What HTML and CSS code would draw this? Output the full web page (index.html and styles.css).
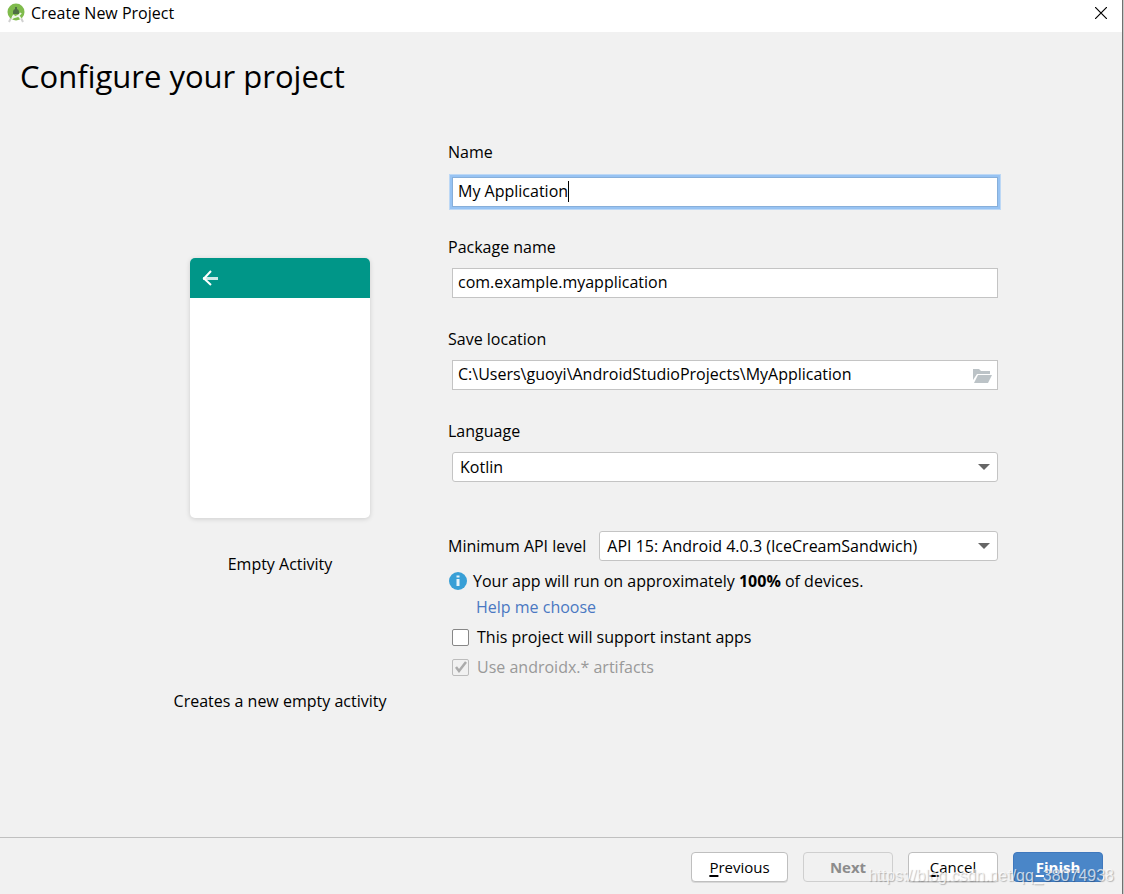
FILE: index.html
```html
<!DOCTYPE html>
<html lang="en">
<head>
  <meta charset="UTF-8" />
  <meta name="viewport" content="width=device-width, initial-scale=1.0"/>
  <title>Create New Project</title>
  <link rel="stylesheet" href="styles.css">
</head>
<body>
  <div class="window">
    <header class="title-bar">
      <svg class="app-icon" width="18" height="20" viewBox="0 0 18 20">
        <path d="M4 15L2 19M14 15l2 4" stroke="#d0d0d0" stroke-width="2" />
        <circle cx="9" cy="9" r="8.500" fill="#7fbb4c" />
        <path d="M6 9a3 3 0 0 1 6 0v2H6z" fill="#4f6f45" />
        <path d="M9 4v4" stroke="#4f6f45" stroke-width="2" />
        <path d="M7 12L5 16M11 12l3 4M5 14q5 1 9-4" stroke="#eef5e8" stroke-width="2" fill="none" />
      </svg>
      <span class="window-title">Create New Project</span>
      <button class="close-button" aria-label="Close">
        <svg width="12" height="12" viewBox="0 0 12 12">
          <path d="M0 0l12 12M12 0L0 12" stroke="#000" stroke-width="1.200" />
        </svg>
      </button>
    </header>

    <main class="content">
      <h1 class="page-title">Configure your project</h1>

      <div class="columns">
        <section class="activity">
          <div class="phone">
            <div class="phone-bar">
              <svg width="16" height="16" viewBox="0 0 16 16" fill="none" stroke="#fff" stroke-width="2">
                <path d="M1 8.500h15" stroke="#cceae7" stroke-width="3" />
                <path d="M9 1L2 8.500L9 15" stroke-width="2" />
              </svg>
            </div>
          </div>
          <div class="activity-name">Empty Activity</div>
          <div class="activity-text">Creates a new empty activity</div>
        </section>

        <form class="form">
          <div class="field field-active">
            <label for="name">Name</label>
            <div class="control">
              <input type="text" id="name" value="My Application" />
              <span class="caret"></span>
            </div>
          </div>

          <div class="field">
            <label for="package">Package name</label>
            <div class="control">
              <input type="text" id="package" value="com.example.myapplication" />
            </div>
          </div>

          <div class="field">
            <label for="location">Save location</label>
            <div class="control">
              <input type="text" id="location" value="C:\Users\guoyi\AndroidStudioProjects\MyApplication" />
              <button type="button" class="browse" aria-label="Browse">
                <svg width="19" height="14" viewBox="0 0 19 14" fill="#bcc3c7">
                  <path d="M0 0h6l2 2h9v3H4L0 11z" />
                  <path d="M5 6h14l-4 8H1z" />
                </svg>
              </button>
            </div>
          </div>

          <div class="field">
            <label for="language">Language</label>
            <div class="control">
              <select id="language">
                <option>Kotlin</option>
                <option>Java</option>
              </select>
              <svg class="arrow" width="12" height="6" viewBox="0 0 12 6"><path d="M0 0h12L6 6z" fill="#666" /></svg>
            </div>
          </div>

          <div class="api-row">
            <label for="api">Minimum API level</label>
            <div class="control">
              <select id="api">
                <option>API 15: Android 4.0.3 (IceCreamSandwich)</option>
              </select>
              <svg class="arrow" width="12" height="6" viewBox="0 0 12 6"><path d="M0 0h12L6 6z" fill="#666" /></svg>
            </div>
          </div>

          <p class="info">
            <svg width="18" height="18" viewBox="0 0 18 18">
              <circle cx="9" cy="9" r="9" fill="#389fd6" />
              <path d="M7.500 3.500h3v2h-3zM7.500 7h3v7h-3z" fill="#e6f4fb" />
            </svg>
            <span>Your app will run on approximately <b>100%</b> of devices.</span>
          </p>
          <a class="help" href="#">Help me choose</a>

          <label class="check">
            <input type="checkbox" />
            This project will support instant apps
          </label>
          <label class="check check-disabled">
            <input type="checkbox" checked disabled />
            <svg class="tick" width="12" height="12" viewBox="0 0 12 12">
              <path d="M1 6l3 4L11 1" fill="none" stroke="#ababab" stroke-width="2.500" />
            </svg>
            Use androidx.* artifacts
          </label>
        </form>
      </div>
    </main>

    <footer class="footer">
      <button class="button button-wide"><span><u>P</u>revious</span></button>
      <button class="button" disabled>Next</button>
      <button class="button"><span><u>C</u>ancel</span></button>
      <button class="button button-primary"><span><u>F</u>inish</span></button>
      <div class="watermark">https://blog.csdn.net/qq_38074938</div>
    </footer>
  </div>
</body>
</html>
```
FILE: styles.css
```css
* {
  box-sizing: border-box;
}

body {
  margin: 0;
  background-color: #c8c8c8;
  font-family: 'Open Sans', 'Noto Sans', sans-serif;
  font-size: 16px;
  line-height: 24px;
  color: #000000;
}

input,
select,
button {
  font: inherit;
  color: inherit;
  margin: 0;
}

.window {
  display: flex;
  flex-direction: column;
  min-height: 100vh;
  margin-right: 1px;
  border-right: 1px solid #707070;
  background-color: #f1f1f1;
}

/* title bar */

.title-bar {
  display: flex;
  align-items: center;
  height: 32px;
  padding: 0 15px 6px 7px;
  background-color: #ffffff;
}

.window-title {
  flex: 1;
  margin-left: 6px;
}

.close-button {
  display: flex;
  padding: 0;
  border: none;
  background: none;
}

/* content */

.content {
  flex: 1;
}

.page-title {
  margin: 0;
  padding: 24px 20px 0;
  font-size: 31px;
  font-weight: 400;
  line-height: 40px;
}

.columns {
  display: grid;
  grid-template-columns: 208px 1fr;
  column-gap: 64px;
  padding: 44px 124px 40px 176px;
}

.activity {
  display: flex;
  flex-direction: column;
  align-items: center;
  padding-top: 118px;
  white-space: nowrap;
}

.phone {
  width: 180px;
  height: 260px;
  border-radius: 5px;
  background-color: #ffffff;
  box-shadow: 0 1px 5px rgba(0, 0, 0, 0.15);
  overflow: hidden;
}

.phone-bar {
  display: flex;
  align-items: center;
  height: 40px;
  padding-left: 12px;
  background-color: #009688;
}

.activity-name {
  margin-top: 34px;
}

.activity-text {
  margin-top: 113px;
}

/* form */

.field {
  margin-bottom: 29px;
}

.field label {
  display: block;
  margin-bottom: 9px;
}

.field-active {
  margin-bottom: 28px;
}

.field-active label {
  margin-bottom: 13px;
}

.control {
  position: relative;
  margin-left: 4px;
}

.control input,
.control select {
  display: block;
  width: 100%;
  height: 30px;
  padding: 0 5px 2px;
  border: 1px solid #c4c4c4;
  background-color: #ffffff;
  outline: none;
}

.control select {
  padding: 0 30px 0 7px;
  border-radius: 3px;
  appearance: none;
}

.field-active input {
  border-color: #87afda;
  box-shadow: 0 0 0 2px #97c3f3, 0 0 0 3px #bdd8f5;
}

.caret {
  position: absolute;
  top: 4px;
  left: 116px;
  width: 1px;
  height: 21px;
  background-color: #000000;
}

.browse {
  position: absolute;
  top: 9px;
  right: 6px;
  display: flex;
  padding: 0;
  border: none;
  background: none;
}

.arrow {
  position: absolute;
  top: 12px;
  right: 8px;
  pointer-events: none;
}

.api-row {
  display: flex;
  align-items: center;
  margin-top: 49px;
}

.api-row .control {
  flex: 1;
  margin-left: 13px;
}

.info {
  display: flex;
  align-items: center;
  gap: 6px;
  margin: 8px 0 2px 1px;
}

.help {
  display: block;
  width: fit-content;
  margin: 0 0 6px 28px;
  color: #4a78c2;
  text-decoration: none;
}

.check {
  position: relative;
  display: flex;
  align-items: center;
  gap: 8px;
  margin: 0 0 6px 4px;
}

.check input {
  width: 17px;
  height: 17px;
  border: 1px solid #878787;
  border-radius: 2px;
  background-color: #ffffff;
  appearance: none;
}

.check-disabled {
  color: #999999;
}

.check-disabled input {
  border-color: #bcbcbc;
  background-color: #f1f1f1;
}

.tick {
  position: absolute;
  top: 6px;
  left: 3px;
}

/* footer */

.footer {
  position: relative;
  display: flex;
  justify-content: flex-end;
  gap: 15px;
  padding: 14px 19px 12px;
  border-top: 1px solid #c0c0c0;
}

.button {
  width: 90px;
  height: 30px;
  padding: 0;
  border: 1px solid #bfbfbf;
  border-radius: 4px;
  background-color: #ffffff;
  box-shadow: 0 1px 0 #d8d8d8;
  font-size: 15px;
}

.button-wide {
  width: 97px;
}

.button u {
  text-decoration-thickness: 2px;
  text-underline-offset: 2px;
  text-decoration-skip-ink: none;
}

.button:disabled {
  border-color: #cfcfcf;
  background-color: #f1f1f1;
  box-shadow: none;
  color: #8c8c8c;
  font-weight: bold;
}

.button-primary {
  border-color: #3f78bd;
  background-color: #4a86c8;
  box-shadow: none;
  color: #ffffff;
  font-weight: bold;
}

.watermark {
  position: absolute;
  right: 8px;
  bottom: 6px;
  font-family: 'Liberation Sans', Arial, sans-serif;
  font-size: 16px;
  color: rgba(255, 255, 255, 0.7);
  text-shadow: 1px 1px 1px rgba(0, 0, 0, 0.25);
  pointer-events: none;
}
```
